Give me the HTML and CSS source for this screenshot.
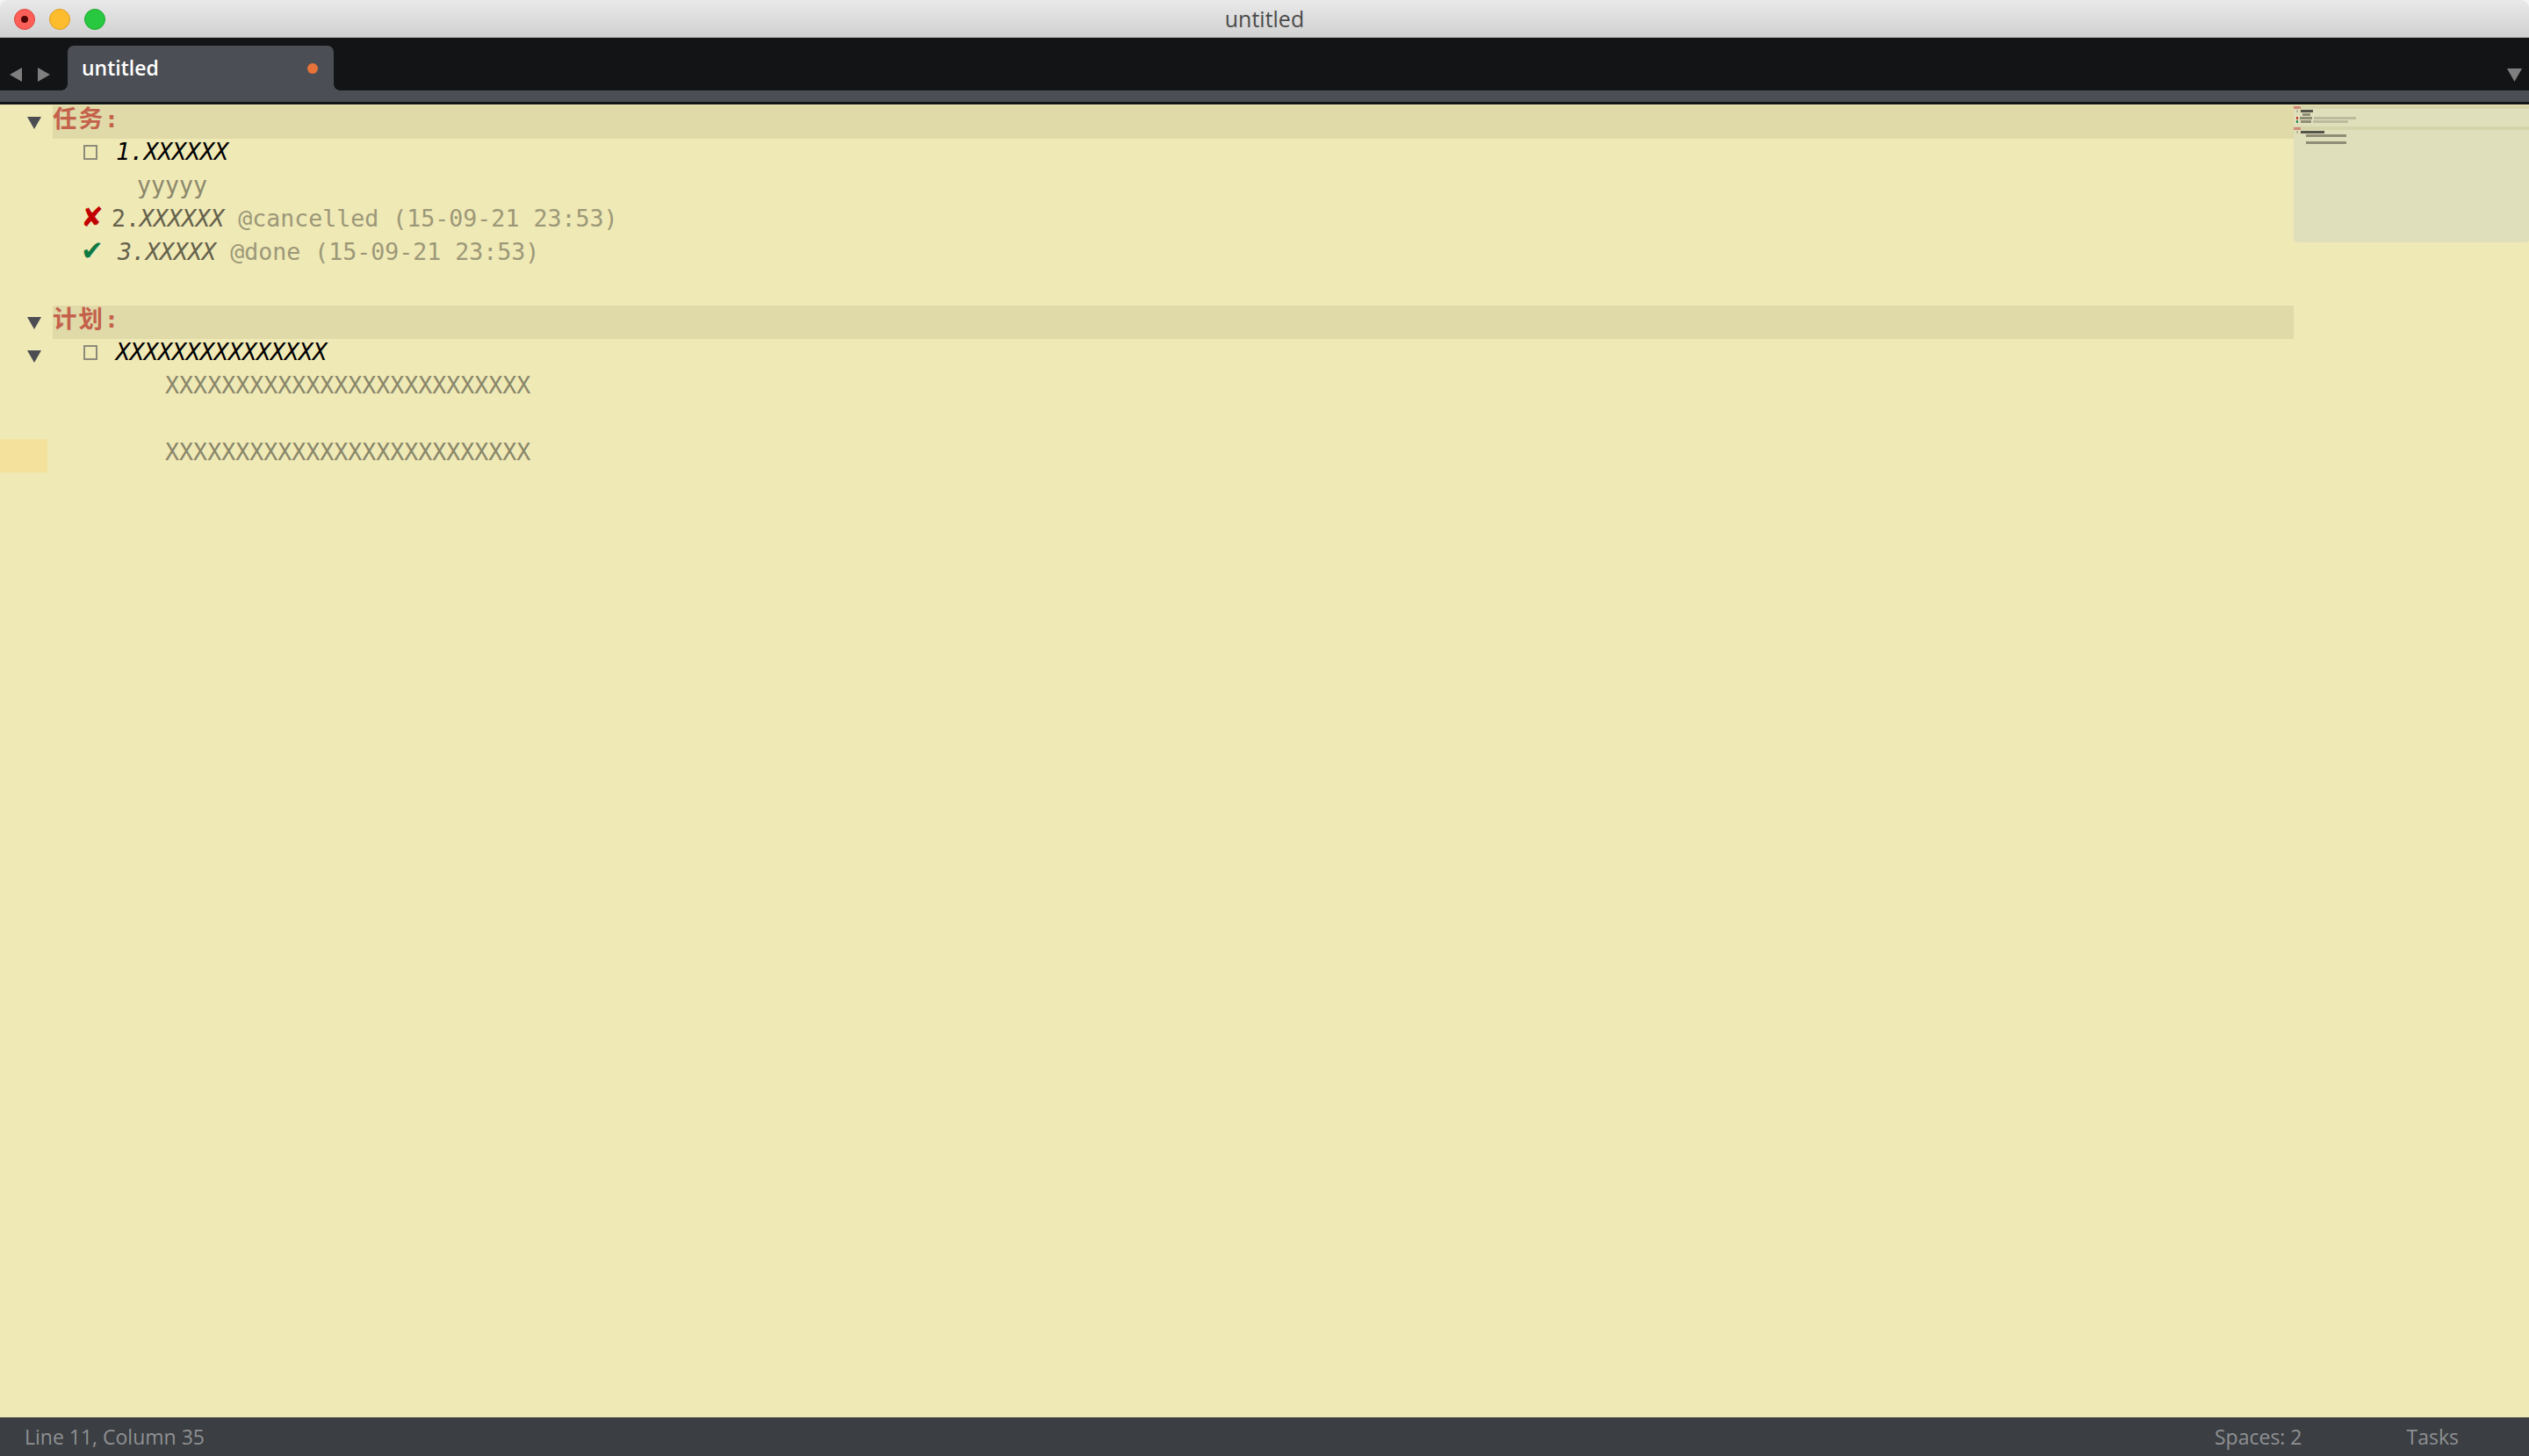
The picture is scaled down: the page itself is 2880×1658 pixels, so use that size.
FILE: index.html
```html
<!DOCTYPE html>
<html lang="zh-CN">
  <head>
    <meta charset="UTF-8" />
    <meta name="viewport" content="width=device-width, initial-scale=1.0" />
    <title>untitled</title>
    <link rel="stylesheet" href="styles.css">
  </head>
  <body>
    <div class="window">
      <div class="titlebar">
        <div class="lights">
          <span class="light close"></span>
          <span class="light min"></span>
          <span class="light max"></span>
        </div>
        <div class="title">untitled</div>
      </div>

      <div class="tabbar">
        <svg class="nav" width="77" height="60" viewBox="0 0 77 60">
          <polygon points="25,34 25,50 11,42" fill="#7f7f7f" />
          <polygon points="43,34 43,50 57,42" fill="#7f7f7f" />
        </svg>
        <div class="tab">
          <span class="tab-name">untitled</span>
          <span class="dirty"></span>
        </div>
        <div class="spacer"></div>
        <svg class="tab-menu" width="28" height="60" viewBox="0 0 28 60">
          <polygon points="3,35 20,35 11.5,50" fill="#7f7f7f" />
        </svg>
      </div>
      <div class="tabstrip"></div>

      <div class="main">
        <div class="editor">
          <div class="line project">
            <div class="gutter"><span class="fold"></span></div>
            <div class="code"><span class="head"><span class="cjk">任务</span>:</span></div>
          </div>
          <div class="line">
            <div class="gutter"></div>
            <div class="code">  <span class="box"></span> <span class="task">1.XXXXXX</span></div>
          </div>
          <div class="line">
            <div class="gutter"></div>
            <div class="code">      <span class="note">yyyyy</span></div>
          </div>
          <div class="line">
            <div class="gutter"></div>
            <div class="code">  <span class="mark cancel">✘</span> <span class="closed">2.<em>XXXXXX</em></span> <span class="tag">@cancelled (15-09-21 23:53)</span></div>
          </div>
          <div class="line">
            <div class="gutter"></div>
            <div class="code">  <span class="mark done">✔</span> <span class="closed"><em>3.XXXXX</em></span> <span class="tag">@done (15-09-21 23:53)</span></div>
          </div>
          <div class="line">
            <div class="gutter"></div>
            <div class="code"></div>
          </div>
          <div class="line project">
            <div class="gutter"><span class="fold"></span></div>
            <div class="code"><span class="head"><span class="cjk">计划</span>:</span></div>
          </div>
          <div class="line">
            <div class="gutter"><span class="fold"></span></div>
            <div class="code">  <span class="box"></span> <span class="task">XXXXXXXXXXXXXXX</span></div>
          </div>
          <div class="line">
            <div class="gutter"></div>
            <div class="code">        <span class="note">XXXXXXXXXXXXXXXXXXXXXXXXXX</span></div>
          </div>
          <div class="line">
            <div class="gutter"></div>
            <div class="code"></div>
          </div>
          <div class="line current">
            <div class="gutter"></div>
            <div class="code">        <span class="note">XXXXXXXXXXXXXXXXXXXXXXXXXX</span></div>
          </div>
        </div>

        <div class="minimap">
          <div class="mm-view">
            <div class="mm-row band"><span class="mm-h" style="margin-left:0;width:8px"></span></div>
            <div class="mm-row"><span class="mm-box" style="margin-left:3px;width:2px"></span><span class="mm-k" style="margin-left:3px;width:14px"></span></div>
            <div class="mm-row"><span class="mm-d" style="margin-left:10px;width:9px"></span></div>
            <div class="mm-row"><span class="mm-r" style="margin-left:3px;width:2px"></span><span class="mm-d" style="margin-left:2px;width:14px"></span><span class="mm-g" style="margin-left:2px;width:48px"></span></div>
            <div class="mm-row"><span class="mm-gr" style="margin-left:3px;width:2px"></span><span class="mm-d" style="margin-left:3px;width:12px"></span><span class="mm-g" style="margin-left:2px;width:40px"></span></div>
            <div class="mm-row"></div>
            <div class="mm-row band"><span class="mm-h" style="margin-left:0;width:8px"></span></div>
            <div class="mm-row"><span class="mm-box" style="margin-left:3px;width:2px"></span><span class="mm-k" style="margin-left:3px;width:27px"></span></div>
            <div class="mm-row"><span class="mm-d" style="margin-left:14px;width:46px"></span></div>
            <div class="mm-row"></div>
            <div class="mm-row"><span class="mm-d" style="margin-left:14px;width:46px"></span></div>
          </div>
        </div>
      </div>

      <div class="statusbar">
        <span class="status-pos">Line 11, Column 35</span>
        <span class="spacer"></span>
        <span class="status-indent">Spaces: 2</span>
        <span class="status-syntax">Tasks</span>
      </div>
    </div>
  </body>
</html>
```

FILE: styles.css
```css
*, *:before, *:after {
  box-sizing: border-box;
}
html, body {
  margin: 0;
  height: 100%;
}
body {
  background: #f4f4f4;
  overflow: hidden;
  font-family: "Open Sans", "Liberation Sans", sans-serif;
}
.window {
  display: flex;
  flex-direction: column;
  height: 100vh;
  border-radius: 9px 9px 0 0;
  overflow: hidden;
}
.spacer {
  flex: 1;
}

/* title bar */
.titlebar {
  flex: none;
  height: 43px;
  display: grid;
  grid-template-columns: 1fr auto 1fr;
  align-items: center;
  background: linear-gradient(#e9e9e9, #d1d1d1);
  border-bottom: 1px solid #b7b7b7;
}
.lights {
  display: flex;
  gap: 16px;
  padding: 1px 0 0 16px;
}
.light {
  width: 24px;
  height: 24px;
  border-radius: 50%;
  display: flex;
  align-items: center;
  justify-content: center;
}
.close {
  background: #fc5f57;
  border: 1px solid #df4640;
}
.close:after {
  content: "";
  width: 8px;
  height: 8px;
  border-radius: 50%;
  background: #4f0604;
}
.min {
  background: #fdbc2e;
  border: 1px solid #de9e22;
}
.max {
  background: #28c840;
  border: 1px solid #1ea931;
}
.title {
  font-size: 25px;
  color: #4b4b4b;
}

/* tabs */
.tabbar {
  flex: none;
  height: 60px;
  display: flex;
  align-items: flex-end;
  background: #131416;
}
.nav, .tab-menu {
  flex: none;
  display: block;
}
.tab {
  position: relative;
  width: 303px;
  height: 51px;
  display: flex;
  align-items: center;
  justify-content: space-between;
  padding: 0 18px 0 16px;
  background: #4b4e54;
  border-radius: 7px 7px 0 0;
}
.tab:before, .tab:after {
  content: "";
  position: absolute;
  bottom: 0;
  width: 7px;
  height: 7px;
}
.tab:before {
  left: -7px;
  background: radial-gradient(circle at 0 0, transparent 6.5px, #4b4e54 7px);
}
.tab:after {
  right: -7px;
  background: radial-gradient(circle at 100% 0, transparent 6.5px, #4b4e54 7px);
}
.tab-name {
  color: #fff;
  font-size: 23px;
  font-weight: 600;
  padding-bottom: 2px;
}
.dirty {
  width: 12px;
  height: 12px;
  border-radius: 50%;
  background: #e8733a;
}
.tabstrip {
  flex: none;
  height: 16px;
  background: #4b4e54;
  border-bottom: 3px solid #141517;
}

/* editor */
.main {
  flex: 1;
  display: flex;
  min-height: 0;
}
.editor {
  flex: 1;
  padding-top: 1px;
  background: #efe9b6;
  font-family: "DejaVu Sans Mono", "Liberation Mono", "Noto Sans CJK SC", monospace;
  font-size: 26.6px;
}
.line {
  display: flex;
  height: 38px;
}
.gutter {
  flex: none;
  width: 54px;
  margin-right: 6px;
  padding: 13px 0 0 31px;
}
.current .gutter {
  background: #f4e19c;
}
.fold {
  display: block;
  width: 0;
  height: 0;
  border-left: 8.5px solid transparent;
  border-right: 8.5px solid transparent;
  border-top: 14px solid #4b4d52;
}
.code {
  flex: 1;
  white-space: pre;
  line-height: 30px;
  color: #000;
}
.project .code {
  background: #e0d9a8;
  line-height: 26px;
}
.head {
  color: #c4614a;
  font-weight: bold;
}
.head .cjk {
  font-family: "Noto Sans CJK SC", sans-serif;
  font-size: 27.5px;
  letter-spacing: 2px;
}
.box {
  display: inline-block;
  width: 16px;
  height: 17px;
  margin: 0 5px 0 3px;
  border: 2px solid #8d8b79;
}
.task {
  font-style: italic;
}
.note {
  color: #8a876a;
}
.mark {
  display: inline-block;
  font-family: "DejaVu Sans", sans-serif;
  font-size: 31px;
  line-height: 18px;
}
.cancel {
  width: 19px;
  color: #c20000;
}
.done {
  width: 26px;
  color: #0d7a43;
}
.closed {
  color: #65614b;
}
.closed em {
  font-style: italic;
}
.tag {
  color: #9c9878;
}

/* minimap */
.minimap {
  flex: none;
  width: 268px;
  padding-top: 1px;
  background: #efe9b6;
}
.mm-view {
  height: 156px;
  background: #e0dfbb;
  border-radius: 0 0 4px 4px;
}
.mm-row {
  display: flex;
  align-items: center;
  height: 4px;
}
.mm-row.band {
  background: #d6d4ab;
}
.mm-row span {
  flex: none;
  height: 3px;
}
.mm-h {
  background: #d08c76;
}
.mm-box {
  background: #b9b79d;
}
.mm-k {
  background: #55544a;
}
.mm-d {
  background: #8f8d76;
}
.mm-g {
  background: #bdbb9d;
}
.mm-r {
  background: #c83a2a;
}
.mm-gr {
  background: #2f8a55;
}

/* status bar */
.statusbar {
  flex: none;
  height: 44px;
  display: flex;
  align-items: center;
  padding: 0 80px 0 28px;
  background: #3b3e42;
  color: #8e9093;
  font-size: 23px;
}
.status-indent {
  margin-right: 119px;
}
```
